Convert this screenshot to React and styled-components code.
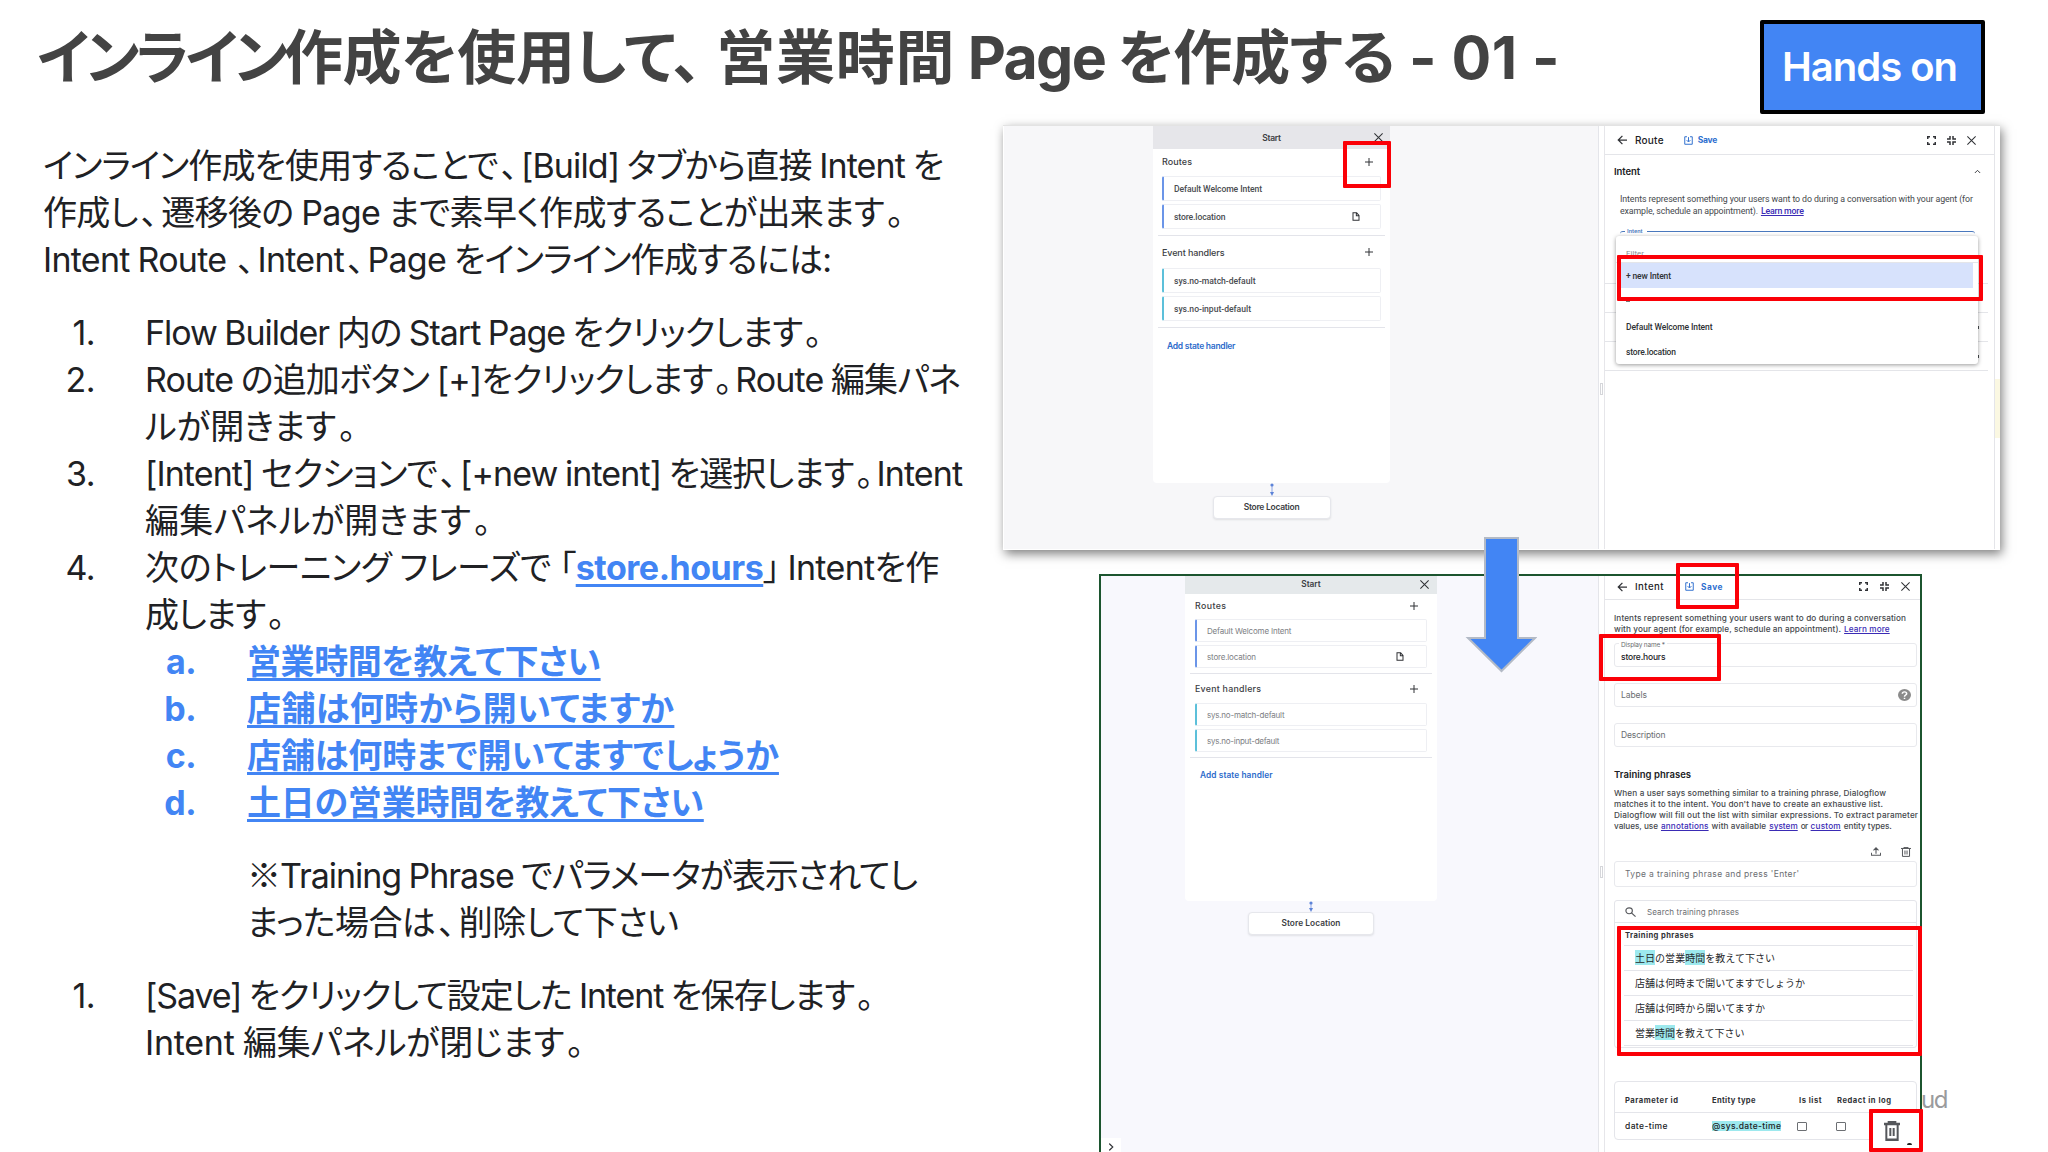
import React, { useLayoutEffect, useRef } from "react";
import styled, { createGlobalStyle, css } from "styled-components";

const SANS = '"Inter", "Noto Sans CJK JP", sans-serif';
const UI = '"Roboto", "Noto Sans CJK JP", sans-serif';
const BLUE = "#4285f4";

const GlobalStyle = createGlobalStyle`
  *, *::before, *::after { box-sizing: border-box; }
  body { margin: 0; background: #fff; overflow: hidden; }
`;

/* ---------- text set to a measure ---------- */

const TextSpan = styled.span`
  display: inline-block;
  justify-self: start;
  white-space: pre;
  flex: none;
`;

function Fit({ w, as, children, ...rest }) {
  const ref = useRef(null);
  useLayoutEffect(() => {
    const el = ref.current;
    if (!el || !w) return;
    el.style.letterSpacing = "0px";
    const natural = el.getBoundingClientRect().width;
    const gaps = Math.max(1, el.textContent.length - 1);
    el.style.letterSpacing = `${(w - natural) / gaps}px`;
  }, [w]);
  const Tag = as || TextSpan;
  return (
    <Tag ref={ref} {...rest}>
      {children}
    </Tag>
  );
}

/* Japanese punctuation keeps a little air around it */
const Punct = styled.span`
  margin-left: ${(p) => (p.$open ? 8 : 3)}px;
  margin-right: ${(p) => (p.$last || p.$open ? 0 : 4)}px;
`;

const Kome = styled.span`
  font-family: "Noto Sans CJK JP", sans-serif;
  line-height: 1;
`;

function Ja({ w, children }) {
  const parts = children.split(/([、。「※])/).filter(Boolean);
  return (
    <Fit w={w}>
      {parts.map((part, i) => {
        if (part === "※") return <Kome key={i}>{part}</Kome>;
        if (/^[、。「]$/.test(part))
          return (
            <Punct key={i} $open={part === "「"} $last={i === parts.length - 1}>
              {part}
            </Punct>
          );
        return part;
      })}
    </Fit>
  );
}

/* ---------- slide ---------- */

const Slide = styled.main`
  width: 2048px;
  height: 1152px;
  overflow: hidden;
  position: relative;
  display: flex;
  flex-direction: column;
  background: #fff;
  font-family: ${SANS};
  color: #202124;
`;

const Header = styled.header`
  flex: none;
  height: 125px;
  display: flex;
  justify-content: space-between;
  align-items: flex-start;
  padding: 20px 63px 0 37px;
`;

const Title = styled.h1`
  margin: 3px 0 0;
  font-size: 59px;
  line-height: 70px;
  font-weight: 700;
  color: #434343;
  font-feature-settings: "palt";
  display: flex;
`;

const Badge = styled.div`
  width: 225px;
  height: 94px;
  border: 4px solid #000;
  border-radius: 2px;
  background: ${BLUE};
  color: #fff;
  font-size: 40px;
  font-weight: 600;
  display: flex;
  align-items: center;
  justify-content: center;
  padding: 0 6px 2px 0;
`;

const Body = styled.div`
  flex: none;
  height: 1027px;
  display: flex;
`;

const Copy = styled.section`
  width: 1003px;
  flex: none;
  padding: 17px 0 0 43px;
  font-size: 34px;
  line-height: 47px;
  word-spacing: -1px;
  font-feature-settings: "palt";
  display: flex;
  flex-direction: column;
  gap: 26px;
`;

const Stack = styled.div`
  display: flex;
  flex-direction: column;
  margin-left: ${(p) => p.$indent || 0}px;
`;

const Line = styled.div`
  height: 47px;
  display: flex;
  white-space: pre;
`;

const Item = styled.div`
  display: grid;
  grid-template-columns: ${(p) => (p.$sub ? "153px" : "52px")} 1fr;
  column-gap: ${(p) => (p.$sub ? "51px" : "50px")};
`;

const Marker = styled.span`
  text-align: right;
  letter-spacing: -0.5px;
  ${(p) =>
    p.$sub &&
    css`
      color: ${BLUE};
      font-weight: 700;
    `}
`;

const LinkText = styled.span`
  display: inline-block;
  white-space: pre;
  color: ${BLUE};
  font-weight: 700;
  text-decoration: underline;
  text-decoration-thickness: 3px;
  text-underline-offset: 4px;
  text-decoration-skip-ink: none;
`;

/* ---------- screenshots ---------- */

const Shots = styled.section`
  position: relative;
  flex: none;
  width: 997px;
  display: flex;
  flex-direction: column;
  font-family: ${UI};
`;

const ShotA = styled.div`
  position: relative;
  flex: none;
  width: 997px;
  height: 425px;
  display: flex;
  padding: 0 0 1px 1px;
  background: #fff;
  border-top: 1px solid #e3e3e3;
  box-shadow: 2px 4px 10px rgba(0, 0, 0, 0.5);
`;

const ShotB = styled.div`
  position: relative;
  flex: none;
  width: 823px;
  height: 600px;
  margin: 24px 0 0 96px;
  display: flex;
  background: #fff;
  border: 2px solid #1c552f;
`;

const Canvas = styled.div`
  flex: none;
  width: ${(p) => p.$w}px;
  padding-left: ${(p) => p.$pl}px;
  background: ${(p) => p.$bg};
  border-right: 1px solid #e4e5ea;
`;

const Splitter = styled.div`
  flex: none;
  width: 6px;
  display: flex;
  justify-content: center;
  padding-top: ${(p) => p.$top}px;
  border-right: 1px solid #e6e6ea;
`;

const Grip = styled.i`
  width: 3px;
  height: 12px;
  border: 1px solid #d5d6da;
`;

const Card = styled.div`
  width: ${(p) => p.$w}px;
  height: ${(p) => p.$h}px;
  background: #fff;
  border-radius: 0 0 4px 4px;
  display: flex;
  flex-direction: column;
`;

const CardHead = styled.div`
  flex: none;
  height: ${(p) => p.$h}px;
  background: ${(p) => p.$bg};
  display: grid;
  grid-template-columns: 1fr auto 1fr;
  align-items: center;
  padding: 0 ${(p) => p.$pr}px ${(p) => p.$pb}px;
  font: 600 ${(p) => p.$fs}px ${SANS};
  color: #3c4043;
  svg { justify-self: end; }
`;

const GroupHead = styled.div`
  flex: none;
  height: ${(p) => p.$h}px;
  display: flex;
  align-items: center;
  justify-content: space-between;
  padding: 0 ${(p) => p.$pr}px ${(p) => p.$pb}px ${(p) => p.$pl}px;
  font: 500 ${(p) => p.$fs}px ${SANS};
  color: #3c4043;
`;

const Handler = styled.div`
  flex: none;
  height: ${(p) => p.$h}px;
  margin: 0 ${(p) => (p.$light ? 10 : 9)}px ${(p) => p.$gap}px;
  padding: 0 ${(p) => (p.$light ? 22 : 20)}px 0 10px;
  border: 1px solid #eeeff3;
  border-left: 2px solid ${(p) => p.$tone};
  border-radius: 2px;
  display: flex;
  align-items: center;
  justify-content: space-between;
  font: ${(p) => (p.$light ? 400 : 500)} ${(p) => p.$fs}px ${(p) => (p.$light ? SANS : UI)};
  color: ${(p) => (p.$light ? "#7d8084" : "#4a4d51")};
`;

const Rule = styled.hr`
  flex: none;
  width: auto;
  height: 1px;
  border: 0;
  margin: 0 5px;
  background: #e3e4ea;
`;

const AddLink = styled.div`
  padding: ${(p) => p.$p};
  font: 600 ${(p) => p.$fs}px/12px ${SANS};
  color: #2d6bcb;
`;

const Flow = styled.div`
  width: ${(p) => p.$w}px;
  display: flex;
  flex-direction: column;
  align-items: center;
`;

const Node = styled.div`
  width: ${(p) => p.$w}px;
  height: 23px;
  border-radius: 4px;
  background: #fff;
  border: 1px solid #e6e7ec;
  box-shadow: 0 1px 2px rgba(60, 64, 67, 0.12);
  display: flex;
  align-items: center;
  justify-content: center;
  padding-bottom: 1px;
  font: 600 ${(p) => p.$fs}px ${SANS};
  color: #3c4043;
`;

const Panel = styled.div`
  flex: none;
  width: ${(p) => p.$w}px;
  display: flex;
  flex-direction: column;
  background: #fff;
  color: #202124;
`;

const PanelHead = styled.div`
  flex: none;
  height: ${(p) => p.$h}px;
  padding: 0 ${(p) => p.$pr}px ${(p) => p.$pb || 0}px ${(p) => p.$pl}px;
  border-bottom: 1px solid #e4e5e9;
  display: flex;
  align-items: center;
  font: 500 ${(p) => p.$fs}px ${SANS};
`;

const PanelName = styled.span`
  display: inline-block;
  flex: none;
  white-space: pre;
  margin-left: 8px;
`;

const SaveLabel = styled.span`
  display: flex;
  align-items: center;
  gap: ${(p) => p.$gap}px;
  margin-left: ${(p) => p.$ml}px;
  font: 700 ${(p) => p.$fs}px ${SANS};
  color: #2f6fcf;
`;

const HeadIcons = styled.span`
  margin-left: auto;
  display: flex;
  align-items: center;
  gap: ${(p) => p.$gap}px;
`;

const Edge = styled.div`
  flex: 1;
  border-left: 1px solid #e4e5e9;
  padding-top: 253px;
`;

const Note = styled.div`
  height: 59px;
  background: #fbf8e2;
`;

const SectionTitle = styled.div`
  flex: none;
  height: ${(p) => p.$h}px;
  margin-top: ${(p) => p.$mt || 0}px;
  padding: 0 ${(p) => p.$pr || 0}px 0 9px;
  display: flex;
  align-items: center;
  justify-content: space-between;
  font: 600 9.5px ${SANS};
`;

const Prose = styled.div`
  flex: none;
  padding: ${(p) => p.$p};
  font: ${(p) => (p.$face ? 500 : 400)} ${(p) => p.$fs}px/${(p) => p.$lh}px ${(p) => p.$face || UI};
  color: #45484c;
`;

const ProseLine = styled.div`
  display: flex;
  gap: 3px;
  white-space: pre;
`;

const Learn = styled.span`
  display: inline-block;
  white-space: pre;
  flex: none;
  font-weight: 500;
  color: #3a2bb5;
  text-decoration: underline;
`;

const Outline = styled.div`
  flex: none;
  height: 20px;
  margin: 14px 19px 0 15px;
  border-top: 1.5px solid #4a78bd;
  border-radius: 3px 3px 0 0;
`;

const OutlineLabel = styled.div`
  width: 22px;
  margin: -5px 0 0 5px;
  padding-left: 2px;
  background: #fff;
  font: 500 6px/8px ${UI};
  color: #4a78bd;
`;

const Accordion = styled.div`
  flex: none;
  height: ${(p) => p.$h}px;
  margin-right: 6px;
  padding: 0 9px 0 11px;
  border-bottom: 1px solid #e4e5e9;
  display: flex;
  align-items: center;
  justify-content: space-between;
`;

const Stub = styled.i`
  width: 2px;
  height: ${(p) => p.$h}px;
  background: #4a4d51;
`;

const Popup = styled.div`
  position: absolute;
  left: 613px;
  top: 110px;
  width: 362px;
  height: 128px;
  background: #fff;
  border-radius: 3px;
  box-shadow: 0 1px 4px rgba(0, 0, 0, 0.4);
  display: flex;
  flex-direction: column;
  font: 500 8.5px ${UI};
  color: #2e3134;
`;

const FilterRow = styled.div`
  height: 27px;
  padding: 13px 0 0 10px;
  line-height: 10px;
  font-size: 8px;
  font-weight: 400;
  color: #8a8d91;
  border-bottom: 1px solid #e4e5e9;
`;

const Option = styled.div`
  height: 25px;
  margin: 0 5px;
  padding-left: 5px;
  display: flex;
  align-items: center;
  background: ${(p) => (p.$active ? "#d7e2fc" : "transparent")};
`;

const Dash = styled.i`
  width: 4px;
  height: 1px;
  margin: 13px 0 12px 10px;
  background: #777;
`;

const RedBox = styled.div`
  position: absolute;
  left: ${(p) => p.$x}px;
  top: ${(p) => p.$y}px;
  width: ${(p) => p.$w}px;
  height: ${(p) => p.$h}px;
  border: 4px solid #fb0007;
  border-radius: 1px;
`;

const TrashBox = styled(RedBox)`
  background: #fff;
  display: flex;
  align-items: center;
  justify-content: center;
  padding-right: 9px;
`;

const Speck = styled.i`
  position: absolute;
  right: 7px;
  bottom: 3px;
  width: 5px;
  height: 2px;
  border-radius: 3px 3px 0 0;
  background: #222;
`;

const Field = styled.div`
  flex: none;
  height: ${(p) => p.$h || 24}px;
  margin: ${(p) => p.$mt}px 3px 0 9px;
  padding: 0 ${(p) => p.$pr || 0}px 0 ${(p) => p.$pl || 6}px;
  border: 1px solid #e8e9ed;
  border-radius: 3px;
  display: flex;
  align-items: center;
  justify-content: space-between;
  position: relative;
  font: 400 8.5px ${SANS};
  color: #6b6e72;
`;

const FieldLabel = styled.span`
  position: absolute;
  left: 4px;
  top: -4px;
  padding: 0 2px;
  background: #fff;
  font-size: 6.5px;
  line-height: 10px;
`;

const Value = styled.span`
  padding-top: 4px;
  font-weight: 500;
  color: #202124;
`;

const Tools = styled.div`
  flex: none;
  height: 19px;
  margin: 10px 9px 0 0;
  display: flex;
  align-items: center;
  justify-content: flex-end;
  gap: 20px;
`;

const PhraseBox = styled.div`
  flex: none;
  height: 148px;
  margin: 13px 3px 0 9px;
  border: 1px solid #e4e5ea;
  border-radius: 3px;
  display: flex;
  flex-direction: column;
`;

const SearchRow = styled.div`
  height: 22px;
  padding-left: 10px;
  display: flex;
  align-items: center;
  gap: 11px;
  border-bottom: 1px solid #e4e5ea;
  font: 400 8px ${SANS};
  color: #6b6e72;
`;

const PhraseHead = styled.div`
  height: 23px;
  margin: 0 3px 0 9px;
  padding-left: 1px;
  border-bottom: 1px solid #e4e5ea;
  font: 700 7.6px/25px ${SANS};
  color: #303236;
`;

const Phrase = styled.div`
  height: 25px;
  margin: 0 3px 0 9px;
  padding-left: 11px;
  border-bottom: 1px solid #e4e5ea;
  font: 400 10px/24px "Noto Sans CJK JP", sans-serif;
  color: #26282b;
`;

const Mark = styled.mark`
  background: #9de9ee;
  color: inherit;
`;

const Table = styled.div`
  flex: none;
  height: 59px;
  margin: 33px 3px 0 9px;
  border: 1px solid #e4e5ea;
  border-radius: 4px;
  font: 500 8.5px ${SANS};
`;

const TableRow = styled.div`
  height: ${(p) => p.$h}px;
  padding: ${(p) => p.$pt || 0}px 0 0 10px;
  display: grid;
  grid-template-columns: 87px ${(p) => (p.$head ? "87px 38px" : "85px 39px")} 1fr;
  align-items: center;
  ${(p) =>
    p.$head &&
    css`
      font-weight: 700;
      font-size: 7.6px;
      color: #303236;
      border-bottom: 1px solid #e4e5ea;
    `}
`;

const Check = styled.i`
  width: 10px;
  height: 9px;
  border: 1px solid #6c6f73;
  border-radius: 1px;
`;

const Corner = styled.div`
  position: absolute;
  left: 0;
  bottom: 16px;
  width: 20px;
  height: 18px;
  background: #fff;
  display: flex;
  align-items: center;
  justify-content: center;
`;

const Footer = styled.div`
  position: absolute;
  left: 918px;
  top: 960px;
  font: 400 24px/30px ${SANS};
  letter-spacing: -1.5px;
  color: #9a9b9d;
`;

const ArrowMark = styled.svg`
  position: absolute;
  left: 462px;
  top: 411px;
`;

/* ---------- icons ---------- */

const Icon = ({ s = 10, h, box = 24, children, fill = "none", sw = 2, color = "#303236" }) => (
  <svg width={s} height={h || s} viewBox={`0 0 ${box} ${box}`} preserveAspectRatio="none" fill={fill} stroke={fill === "none" ? color : "none"} strokeWidth={sw}>
    {children}
  </svg>
);
const Close = ({ s = 9 }) => <Icon s={s} sw={2.8}><path d="M1 1 23 23M23 1 1 23" /></Icon>;
const Plus = ({ s = 8 }) => <Icon s={s} sw={3}><path d="M12 0V24M0 12H24" /></Icon>;
const Doc = () => <Icon s={8} h={9} sw={3}><path d="M3 2H14L21 9V22H3ZM13 2V10H21" /></Icon>;
const Back = () => <Icon s={10} sw={3}><path d="M24 12H3M13 2 3 12 13 22" /></Icon>;
const SaveIcon = () => <Icon s={9} sw={2.6} color="#2f6fcf"><path d="M8 2H2V22H22V2H16M12 3V15M7 11 12 16 17 11" /></Icon>;
const Expand = () => <Icon s={9} sw={4}><path d="M2 8V2H8M16 2H22V8M22 16V22H16M8 22H2V16" /></Icon>;
const Shrink = () => <Icon s={9} sw={4}><path d="M8 0V8H0M16 0V8H24M24 16H16V24M8 24V16H0" /></Icon>;
const Up = () => <Icon s={7} sw={3.2}><path d="M3 17 12 8 21 17" /></Icon>;
const Help = () => (
  <svg width="13" height="12" viewBox="0 0 24 24" preserveAspectRatio="none">
    <circle cx="12" cy="12" r="12" fill="#8b8b8b" />
    <path d="M8 9.5C8 4.5 16 4.5 16 9.5C16 12 12 12.3 12 15.5M12 17.5V20" fill="none" stroke="#fff" strokeWidth="2.8" />
  </svg>
);
const Trash = ({ s, h, sw = 2.4 }) => (
  <Icon s={s} h={h} sw={sw} color="#55575b"><path d="M0 3.5H24M7 3V1H17V3M3.5 4V22.5H20.5V4M9.5 8.500V18M14.500 8.500V18" /></Icon>
);
const Upload = () => <Icon s={10} h={9} sw={2.6} color="#55575b"><path d="M12 18V3M6 9 12 2 18 9M1 15V22H23V15" /></Icon>;
const Search = () => <Icon s={11} h={10} sw={2.6} color="#55575b"><circle cx="9" cy="9" r="7" /><path d="M14 14 23 23" /></Icon>;
const Link = ({ h }) => (
  <svg width="6" height={h} viewBox={`0 0 6 ${h}`}>
    <path d={`M3 1V${h - 2}`} stroke="#8ea6e4" strokeWidth="1" />
    <circle cx="3" cy="2" r="1.6" fill="#5c83d8" />
    <path d={`M1 ${h - 4}H5L3 ${h}Z`} fill="#5c83d8" />
  </svg>
);

/* ---------- flow card shared by both screenshots ---------- */

function FlowCard({ d }) {
  const row = (text, w, tone, gap, icon) => (
    <Handler $h={d.rowH} $gap={gap} $tone={tone} $fs={d.rowFs} $light={d.light}>
      <Fit w={w}>{text}</Fit>
      {icon}
    </Handler>
  );
  return (
    <>
      <Card $w={d.w} $h={d.h}>
        <CardHead $h={d.headH} $bg={d.headBg} $pr={d.closeR} $pb={d.headPb} $fs={d.fs - 0.5}>
          <span />
          <Fit w={d.wStart}>Start</Fit>
          <Close />
        </CardHead>
        <GroupHead $h={d.groupH} $pl={d.groupL} $pr={d.plusR} $pb={2} $fs={d.fs}>
          <Fit w={d.wRoutes}>Routes</Fit>
          <Plus />
        </GroupHead>
        {row("Default Welcome Intent", d.wRows[0], "#6b95e8", d.gap)}
        {row("store.location", d.wRows[1], "#6b95e8", d.ruleGap, <Doc />)}
        <Rule />
        <GroupHead $h={d.groupH2} $pl={d.groupL} $pr={d.plusR} $pb={0} $fs={d.fs}>
          <Fit w={d.wEvents}>Event handlers</Fit>
          <Plus />
        </GroupHead>
        {row("sys.no-match-default", d.wRows[2], "#5cc0da", d.gap)}
        {row("sys.no-input-default", d.wRows[3], "#5cc0da", d.ruleGap)}
        <Rule />
        <AddLink $p={d.addPad} $fs={d.fs - 0.5}>
          <Fit w={d.wAdd}>Add state handler</Fit>
        </AddLink>
      </Card>
      <Flow $w={d.w}>
        <Link h={d.linkH} />
        <Node $w={d.nodeW} $fs={d.fs - 0.5}>
          <Fit w={d.wNode}>Store Location</Fit>
        </Node>
      </Flow>
    </>
  );
}

const cardA = {
  w: 237, h: 357, headH: 23, headPb: 0, headBg: "#e6e6ea", closeR: 7, fs: 9, wStart: 19,
  groupH: 27, groupL: 9, plusR: 17, wRoutes: 30, rowH: 25, rowFs: 8.6, gap: 3, ruleGap: 6,
  wRows: [88, 51.5, 81.5, 77], groupH2: 32, wEvents: 62.5, addPad: "12px 0 0 14px",
  wAdd: 68.5, linkH: 13, nodeW: 118, wNode: 56,
};

const cardB = {
  w: 252, h: 325, headH: 18, headPb: 2, headBg: "#e5e9eb", closeR: 8, fs: 8.8, wStart: 19.5,
  groupH: 25, groupL: 10, plusR: 19, wRoutes: 31, rowH: 23, rowFs: 8, gap: 3, ruleGap: 5, light: true,
  wRows: [84.5, 49, 77.5, 72.5], groupH2: 29, wEvents: 66, addPad: "11px 0 0 15px",
  wAdd: 72.5, linkH: 11, nodeW: 126, wNode: 59,
};

const subItems = [
  ["a.", 354, "営業時間を教えて下さい"],
  ["b.", 427, "店舗は何時から開いてますか"],
  ["c.", 532, "店舗は何時まで開いてますでしょうか"],
  ["d.", 457, "土日の営業時間を教えて下さい"],
];

function Instructions() {
  return (
    <Copy>
      <Stack>
        <Line><Ja w={901}>インライン作成を使用することで、[Build] タブから直接 Intent を</Ja></Line>
        <Line><Ja w={861}>作成し、遷移後の Page まで素早く作成することが出来ます。</Ja></Line>
        <Line><Ja w={789}>Intent Route 、Intent、Page をインライン作成するには:</Ja></Line>
      </Stack>
      <Stack>
        <Item>
          <Marker>1.</Marker>
          <Line><Ja w={677}>Flow Builder 内の Start Page をクリックします。</Ja></Line>
        </Item>
        <Item>
          <Marker>2.</Marker>
          <Stack>
            <Line><Ja w={816}>Route の追加ボタン [+]をクリックします。Route 編集パネ</Ja></Line>
            <Line><Ja w={211}>ルが開きます。</Ja></Line>
          </Stack>
        </Item>
        <Item>
          <Marker>3.</Marker>
          <Stack>
            <Line><Ja w={818}>[Intent] セクションで、[+new intent] を選択します。Intent</Ja></Line>
            <Line><Ja w={346}>編集パネルが開きます。</Ja></Line>
          </Stack>
        </Item>
        <Item>
          <Marker>4.</Marker>
          <Stack>
            <Line>
              <Ja w={431}>次のトレーニング フレーズで「</Ja>
              <Fit as={LinkText} w={188}>store.hours</Fit>
              <Ja w={176}>」 Intentを作</Ja>
            </Line>
            <Line><Ja w={140}>成します。</Ja></Line>
          </Stack>
        </Item>
        {subItems.map(([m, w, text]) => (
          <Item $sub key={m}>
            <Marker $sub>{m}</Marker>
            <Line><Fit as={LinkText} w={w}>{text}</Fit></Line>
          </Item>
        ))}
      </Stack>
      <Stack $indent={204}>
        <Line><Ja w={671}>※Training Phrase でパラメータが表示されてし</Ja></Line>
        <Line><Ja w={432}>まった場合は、削除して下さい</Ja></Line>
      </Stack>
      <Item>
        <Marker>1.</Marker>
        <Stack>
          <Line><Ja w={729}>[Save] をクリックして設定した Intent を保存します。</Ja></Line>
          <Line><Ja w={439}>Intent 編集パネルが閉じます。</Ja></Line>
        </Stack>
      </Item>
    </Copy>
  );
}

function RouteShot() {
  return (
    <ShotA>
      <Canvas $w={595} $pl={149} $bg="#f7f7f9">
        <FlowCard d={cardA} />
      </Canvas>
      <Splitter $top={257}><Grip /></Splitter>
      <Panel $w={389}>
        <PanelHead $h={29} $pl={12} $pr={18} $fs={10}>
          <Back />
          <Fit as={PanelName} w={28.5}>Route</Fit>
          <SaveLabel $ml={20} $gap={5} $fs={8.5}><SaveIcon /><Fit w={19.5}>Save</Fit></SaveLabel>
          <HeadIcons $gap={11}><Expand /><Shrink /><Close /></HeadIcons>
        </PanelHead>
        <SectionTitle $h={32} $pr={13}><Fit w={26}>Intent</Fit><Up /></SectionTitle>
        <Prose $p="6px 0 0 15px" $fs={8.8} $lh={12.2}>
          <ProseLine><Fit w={353}>Intents represent something your users want to do during a conversation with your agent (for</Fit></ProseLine>
          <ProseLine><Fit w={138}>example, schedule an appointment).</Fit><Fit as={Learn} w={43}>Learn more</Fit></ProseLine>
        </Prose>
        <Outline><OutlineLabel><Fit w={15.5}>Intent</Fit></OutlineLabel></Outline>
        <Accordion $h={33} />
        <Accordion $h={29}><Stub $h={7} /></Accordion>
        <Accordion $h={29}><Stub $h={7} /><Stub $h={3} /></Accordion>
        <Accordion $h={29}><Stub $h={2} /><Stub $h={3} /></Accordion>
      </Panel>
      <Edge><Note /></Edge>
      <Popup>
        <FilterRow><Fit w={18}>Filter</Fit></FilterRow>
        <Option $active><Fit w={45}>+ new Intent</Fit></Option>
        <Dash />
        <Option><Fit w={86.5}>Default Welcome Intent</Fit></Option>
        <Option><Fit w={50}>store.location</Fit></Option>
      </Popup>
      <RedBox $x={340} $y={15} $w={48} $h={47} />
      <RedBox $x={614} $y={129} $w={366} $h={46} />
    </ShotA>
  );
}

function IntentShot() {
  return (
    <ShotB>
      <Canvas $w={498} $pl={84} $bg="#f8f8fd">
        <FlowCard d={cardB} />
      </Canvas>
      <Splitter $top={290}><Grip /></Splitter>
      <Panel $w={315}>
        <PanelHead $h={24} $pl={12} $pr={10} $pb={2} $fs={9.6}>
          <Back />
          <Fit as={PanelName} w={28.5}>Intent</Fit>
          <SaveLabel $ml={21} $gap={7} $fs={8.3}><SaveIcon /><Fit w={21.5}>Save</Fit></SaveLabel>
          <HeadIcons $gap={12}><Expand /><Shrink /><Close /></HeadIcons>
        </PanelHead>
        <Prose $p="13px 0 0 9px" $fs={8.2} $lh={11.2} $face={SANS}>
          <ProseLine><Fit w={292}>Intents represent something your users want to do during a conversation</Fit></ProseLine>
          <ProseLine><Fit w={227}>with your agent (for example, schedule an appointment).</Fit><Fit as={Learn} w={45.5}>Learn more</Fit></ProseLine>
        </Prose>
        <Field $mt={8}>
          <FieldLabel><Fit w={44}>Display name *</Fit></FieldLabel>
          <Value><Fit w={44.5}>store.hours</Fit></Value>
        </Field>
        <Field $mt={16} $pr={5}><Fit w={26}>Labels</Fit><Help /></Field>
        <Field $mt={16}><Fit w={44.5}>Description</Fit></Field>
        <SectionTitle $h={20} $mt={17}><Fit w={77}>Training phrases</Fit></SectionTitle>
        <Prose $p="4px 0 0 9px" $fs={8.2} $lh={11} $face={SANS}>
          <ProseLine><Fit w={272}>When a user says something similar to a training phrase, Dialogflow</Fit></ProseLine>
          <ProseLine><Fit w={269}>matches it to the intent. You don't have to create an exhaustive list.</Fit></ProseLine>
          <ProseLine><Fit w={304}>Dialogflow will fill out the list with similar expressions. To extract parameter</Fit></ProseLine>
          <ProseLine>
            <Fit w={44}>values, use</Fit>
            <Fit as={Learn} w={47.5}>annotations</Fit>
            <Fit w={54.5}>with available</Fit>
            <Fit as={Learn} w={28.5}>system</Fit>
            <Fit w={7.5}>or</Fit>
            <Fit as={Learn} w={30}>custom</Fit>
            <Fit w={48}>entity types.</Fit>
          </ProseLine>
        </Prose>
        <Tools><Upload /><Trash s={10} h={10} /></Tools>
        <Field $h={26} $pl={10} $mt={0}><Fit w={174}>Type a training phrase and press 'Enter'</Fit></Field>
        <PhraseBox>
          <SearchRow><Search /><Fit w={92}>Search training phrases</Fit></SearchRow>
          <PhraseHead><Fit w={68.5}>Training phrases</Fit></PhraseHead>
          <Phrase><Fit w={140}><Mark>土日</Mark>の営業<Mark>時間</Mark>を教えて下さい</Fit></Phrase>
          <Phrase><Fit w={170}>店舗は何時まで開いてますでしょうか</Fit></Phrase>
          <Phrase><Fit w={130}>店舗は何時から開いてますか</Fit></Phrase>
          <Phrase><Fit w={109.5}>営業<Mark>時間</Mark>を教えて下さい</Fit></Phrase>
        </PhraseBox>
        <Table>
          <TableRow $head $h={31} $pt={6}>
            <Fit w={53}>Parameter id</Fit><Fit w={43.5}>Entity type</Fit><Fit w={22.5}>Is list</Fit><Fit w={54}>Redact in log</Fit>
          </TableRow>
          <TableRow $h={26}>
            <Fit w={42.5}>date-time</Fit><span><Mark><Fit w={69}>@sys.date-time</Fit></Mark></span><Check /><Check />
          </TableRow>
        </Table>
      </Panel>
      <Corner><Icon s={6} h={8} sw={4}><path d="M5 2 19 12 5 22" /></Icon></Corner>
      <RedBox $x={575} $y={-13} $w={63} $h={46} />
      <RedBox $x={498} $y={58} $w={122} $h={47} />
      <RedBox $x={516} $y={350} $w={305} $h={130} />
      <TrashBox $x={768} $y={533} $w={54} $h={43}><Trash s={16} h={20} sw={3} /><Speck /></TrashBox>
    </ShotB>
  );
}

export default function App() {
  return (
    <Slide>
      <GlobalStyle />
      <Header>
        <Title>
          <Fit w={251}>インライン</Fit>
          <Fit w={418}>作成を使用して、</Fit>
          <Fit w={253}> 営業時間</Fit>
          <Fit w={164}> Page </Fit>
          <Fit w={278}>を作成する</Fit>
          <Fit w={165}> - 01 -</Fit>
        </Title>
        <Badge><Fit w={176}>Hands on</Fit></Badge>
      </Header>
      <Body>
        <Instructions />
        <Shots>
          <RouteShot />
          <IntentShot />
          <Footer>ud</Footer>
          <ArrowMark width="72" height="138" viewBox="0 0 72 138">
            <path d="M20 2H53V102H70L36.500 135L3 102H20Z" fill={BLUE} stroke="#b3bac6" strokeWidth="2" />
          </ArrowMark>
        </Shots>
      </Body>
    </Slide>
  );
}
